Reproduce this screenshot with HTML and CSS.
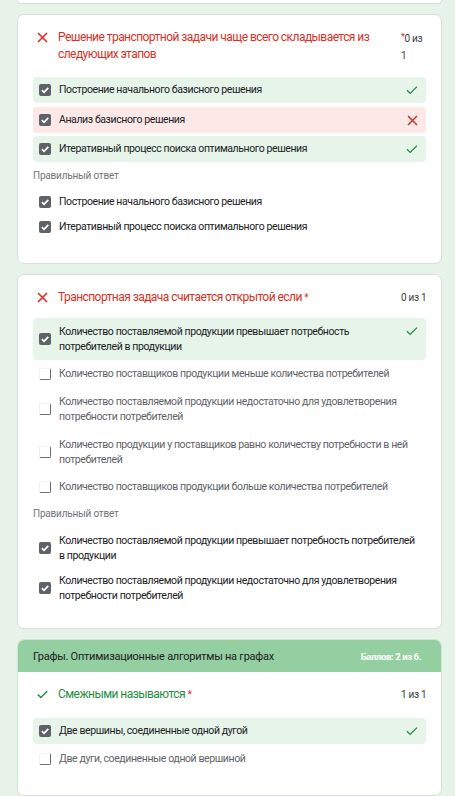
FILE: index.html
```html
<!DOCTYPE html>
<html lang="ru">
<head>
<meta charset="utf-8">
<link rel="stylesheet" href="styles.css">
</head>
<body>
<div class="page">
  <div class="card card-tail"></div>

  <div class="card">
    <div class="q-head">
      <span class="q-icon"><svg width="11" height="11" viewBox="0 0 11 11"><path d="M1 1L10 10M10 1L1 10" stroke="#d93025" stroke-width="1.6" fill="none"/></svg></span>
      <div class="q-title wrong">Решение транспортной задачи чаще всего складывается из следующих этапов</div>
      <div class="q-score"><span class="req sup">*</span>0 из 1</div>
    </div>
    <div class="opts first">
      <div class="opt ok"><span class="cb on"><svg width="12" height="12" viewBox="0 0 12 12"><path d="M2.8 6.2L5 8.3L9.3 3.8" stroke="#fff" stroke-width="1.7" fill="none"/></svg></span><span class="opt-text">Построение начального базисного решения</span><span class="mark"><svg width="12" height="10" viewBox="0 0 12 10"><path d="M1 5.2L4.2 8.4L11 1.6" stroke="#1e8e3e" stroke-width="1.3" fill="none"/></svg></span></div>
      <div class="opt bad"><span class="cb on"><svg width="12" height="12" viewBox="0 0 12 12"><path d="M2.8 6.2L5 8.3L9.3 3.8" stroke="#fff" stroke-width="1.7" fill="none"/></svg></span><span class="opt-text">Анализ базисного решения</span><span class="mark"><svg width="11" height="11" viewBox="0 0 11 11"><path d="M1 1L10 10M10 1L1 10" stroke="#d93025" stroke-width="1.5" fill="none"/></svg></span></div>
      <div class="opt ok"><span class="cb on"><svg width="12" height="12" viewBox="0 0 12 12"><path d="M2.8 6.2L5 8.3L9.3 3.8" stroke="#fff" stroke-width="1.7" fill="none"/></svg></span><span class="opt-text">Итеративный процесс поиска оптимального решения</span><span class="mark"><svg width="12" height="10" viewBox="0 0 12 10"><path d="M1 5.2L4.2 8.4L11 1.6" stroke="#1e8e3e" stroke-width="1.3" fill="none"/></svg></span></div>
    </div>
    <div class="answer-label">Правильный ответ</div>
    <div class="answers">
      <div class="ans"><span class="cb on"><svg width="12" height="12" viewBox="0 0 12 12"><path d="M2.8 6.2L5 8.3L9.3 3.8" stroke="#fff" stroke-width="1.7" fill="none"/></svg></span><span class="opt-text">Построение начального базисного решения</span></div>
      <div class="ans"><span class="cb on"><svg width="12" height="12" viewBox="0 0 12 12"><path d="M2.8 6.2L5 8.3L9.3 3.8" stroke="#fff" stroke-width="1.7" fill="none"/></svg></span><span class="opt-text">Итеративный процесс поиска оптимального решения</span></div>
    </div>
  </div>

  <div class="card">
    <div class="q-head">
      <span class="q-icon"><svg width="11" height="11" viewBox="0 0 11 11"><path d="M1 1L10 10M10 1L1 10" stroke="#d93025" stroke-width="1.6" fill="none"/></svg></span>
      <div class="q-title wrong">Транспортная задача считается открытой если <span class="req">*</span></div>
      <div class="q-score">0 из 1</div>
    </div>
    <div class="opts second">
      <div class="opt ok multi"><span class="cb on"><svg width="12" height="12" viewBox="0 0 12 12"><path d="M2.8 6.2L5 8.3L9.3 3.8" stroke="#fff" stroke-width="1.7" fill="none"/></svg></span><span class="opt-text">Количество поставляемой продукции превышает потребность потребителей в продукции</span><span class="mark"><svg width="12" height="10" viewBox="0 0 12 10"><path d="M1 5.2L4.2 8.4L11 1.6" stroke="#1e8e3e" stroke-width="1.3" fill="none"/></svg></span></div>
      <div class="opt off"><span class="cb"></span><span class="opt-text">Количество поставщиков продукции меньше количества потребителей</span></div>
      <div class="opt off multi tall"><span class="cb"></span><span class="opt-text">Количество поставляемой продукции недостаточно для удовлетворения потребности потребителей</span></div>
      <div class="opt off multi tall"><span class="cb"></span><span class="opt-text">Количество продукции у поставщиков равно количеству потребности в ней потребителей</span></div>
      <div class="opt off"><span class="cb"></span><span class="opt-text">Количество поставщиков продукции больше количества потребителей</span></div>
    </div>
    <div class="answer-label">Правильный ответ</div>
    <div class="answers">
      <div class="ans multi"><span class="cb on"><svg width="12" height="12" viewBox="0 0 12 12"><path d="M2.8 6.2L5 8.3L9.3 3.8" stroke="#fff" stroke-width="1.7" fill="none"/></svg></span><span class="opt-text">Количество поставляемой продукции превышает потребность потребителей в продукции</span></div>
      <div class="ans multi"><span class="cb on"><svg width="12" height="12" viewBox="0 0 12 12"><path d="M2.8 6.2L5 8.3L9.3 3.8" stroke="#fff" stroke-width="1.7" fill="none"/></svg></span><span class="opt-text">Количество поставляемой продукции недостаточно для удовлетворения потребности потребителей</span></div>
    </div>
  </div>

  <div class="card section">
    <div class="sec-head">
      <span class="sec-title">Графы. Оптимизационные алгоритмы на графах</span>
      <span class="sec-score">Баллов: 2 из 6.</span>
    </div>
    <div class="q-head">
      <span class="q-icon"><svg width="11" height="9" viewBox="0 0 11 9"><path d="M0.8 4.6L3.8 7.6L10.2 1.2" stroke="#1e8e3e" stroke-width="1.4" fill="none"/></svg></span>
      <div class="q-title right">Смежными называются <span class="req">*</span></div>
      <div class="q-score">1 из 1</div>
    </div>
    <div class="opts third">
      <div class="opt ok"><span class="cb on"><svg width="12" height="12" viewBox="0 0 12 12"><path d="M2.8 6.2L5 8.3L9.3 3.8" stroke="#fff" stroke-width="1.7" fill="none"/></svg></span><span class="opt-text">Две вершины, соединенные одной дугой</span><span class="mark"><svg width="12" height="10" viewBox="0 0 12 10"><path d="M1 5.2L4.2 8.4L11 1.6" stroke="#1e8e3e" stroke-width="1.3" fill="none"/></svg></span></div>
      <div class="opt off"><span class="cb"></span><span class="opt-text">Две дуги, соединенные одной вершиной</span></div>
    </div>
  </div>
</div>
</body>
</html>
```

FILE: styles.css
```css
* { box-sizing: border-box; }
html, body { margin: 0; padding: 0; }
body {
  background: #e7f3e9;
  font-family: Roboto, "Noto Sans", Arial, sans-serif;
  color: #202124;
}
.page {
  width: 455px;
  height: 796px;
  overflow: hidden;
  padding: 0 13px 0 17px;
}
.card {
  background: #fff;
  border: 1px solid #dadfdb;
  border-radius: 7px;
  margin-bottom: 10px;
  padding: 0 15px 0 15px;
}
.card-tail {
  height: 4px;
  border-top: 0;
  border-radius: 0 0 5px 5px;
}
.q-head {
  display: flex;
  align-items: flex-start;
  padding: 14px 0 0 0;
}
.q-icon {
  width: 16px;
  height: 17px;
  flex: none;
  display: flex;
  align-items: center;
  justify-content: center;
  margin-left: 1px;
}
.q-title {
  flex: 1;
  font-size: 12px;
  letter-spacing: -0.55px;
  line-height: 17px;
  margin-left: 8px;
  padding-right: 24px;
}
.q-title.wrong { color: #d93025; }
.q-title.right { color: #1e8e3e; }
.req { color: #d93025; font-size: 10px; }
.req.sup { vertical-align: 2px; font-size: 9px; }
.q-score {
  flex: none;
  width: 27px;
  font-size: 10px;
  letter-spacing: -0.3px;
  line-height: 17px;
  color: #3c4043;
  margin-right: -2px;
}
.opts {
  display: flex;
  flex-direction: column;
  gap: 3.5px;
  margin-top: 13px;
}
.opts.second { gap: 1px; margin-top: 12px; }
.opts.third { gap: 2px; margin-top: 15px; }
.opt {
  display: flex;
  align-items: center;
  min-height: 26px;
  padding: 6px 8px 6px 6px;
  border-radius: 4px;
}
.opt.multi { min-height: 40px; }
.opt.tall { min-height: 42px; }
.opts.third .opt.ok { min-height: 25px; }
.opt.ok { background: #e6f4ea; }
.opt.bad { background: #fce8e6; }
.opt.off { color: #5f6368; }
.opt-text {
  flex: 1;
  font-size: 10.5px;
  letter-spacing: -0.4px;
  line-height: 14px;
  margin-left: 8px;
}
.multi .opt-text { line-height: 15px; }
.mark {
  flex: none;
  width: 12px;
  display: flex;
  justify-content: center;
  align-self: flex-start;
  padding-top: 2px;
}
.cb {
  flex: none;
  width: 12px;
  height: 12px;
  border-radius: 2px;
  display: flex;
  align-items: center;
  justify-content: center;
  border: 1.5px solid #f1f1f1;
  border-right-color: #6b6f73;
  border-bottom-color: #6b6f73;
}
.cb.on {
  background: #5f6368;
  border: 0;
}
.answer-label {
  font-size: 10px;
  letter-spacing: -0.2px;
  line-height: 14px;
  color: #70757a;
  margin-top: 7px;
}
.answers {
  display: flex;
  flex-direction: column;
  margin-top: 6px;
  padding-bottom: 24px;
}
.ans {
  display: flex;
  align-items: center;
  min-height: 25px;
  padding: 5px 10px 5px 6px;
}
.ans.multi { padding: 3px 10px 3px 6px; min-height: 40px; }
.card:nth-child(3) .answers { margin-top: 7px; padding-bottom: 20px; }
.section {
  padding: 0;
  border-color: #cfe5d4;
}
.section .q-head, .section .opts { margin-left: 15px; margin-right: 15px; }
.section .opts { padding-bottom: 23px; }
.sec-head {
  display: flex;
  align-items: center;
  justify-content: space-between;
  height: 32px;
  padding: 0 20px 0 15px;
  background: #93cfa0;
  border-radius: 6px 6px 0 0;
}
.sec-title { font-size: 11px; letter-spacing: -0.25px; color: #202124; }
.sec-score { font-size: 9.5px; letter-spacing: -0.4px; font-weight: 700; color: #fff; }
.section .q-head { padding-top: 14px; }
```
